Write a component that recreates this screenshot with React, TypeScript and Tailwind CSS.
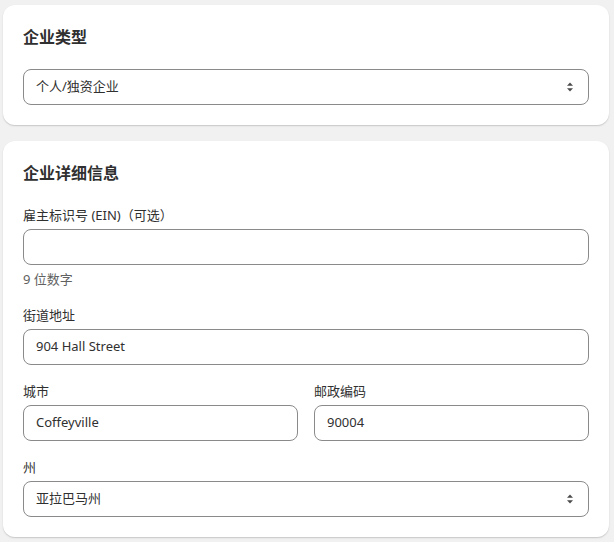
import React from "react";

const font = { fontFamily: '"Noto Sans", "Noto Sans CJK SC", sans-serif' };

function Arrows() {
  return (
    <svg width="8" height="12" viewBox="0 0 8 12" className="shrink-0">
      <path d="M4 1.5 L7 4.8 H1 Z" fill="#4a4a4a" />
      <path d="M4 10.5 L7 7.2 H1 Z" fill="#4a4a4a" />
    </svg>
  );
}

function Select({ value }: { value: string }) {
  return (
    <div className="flex h-9 items-center justify-between rounded-lg border border-[#8a8a8a] bg-white pl-3 pr-[14px] text-[13px] text-[#303030]">
      <span>{value}</span>
      <Arrows />
    </div>
  );
}

function Input({ value }: { value?: string }) {
  return (
    <div className="flex h-9 items-center rounded-lg border border-[#8a8a8a] bg-white px-3 text-[13px] text-[#303030]">
      <span>{value ?? ""}</span>
    </div>
  );
}

function Label({ children }: { children: React.ReactNode }) {
  return <div className="mb-1 text-[13px] leading-5 text-[#303030]">{children}</div>;
}

export default function App() {
  return (
    <div style={font} className="min-h-[542px] w-[614px] bg-[#f1f1f1] pl-[3px] pr-[5px] pt-[5px]">
      <div className="flex flex-col gap-5 rounded-xl bg-white p-5 shadow-[0_1px_2px_rgba(0,0,0,0.12),0_1px_0_rgba(0,0,0,0.06)]">
        <h2 className="text-base font-bold leading-6 text-[#303030]">企业类型</h2>
        <Select value="个人/独资企业" />
      </div>
      <div className="mt-4 flex flex-col rounded-xl bg-white p-5 shadow-[0_1px_2px_rgba(0,0,0,0.12),0_1px_0_rgba(0,0,0,0.06)]">
        <h2 className="mb-5 text-base font-bold leading-6 text-[#303030]">企业详细信息</h2>
        <div className="flex flex-col gap-4">
          <div>
            <Label>雇主标识号 (EIN)（可选）</Label>
            <Input />
            <div className="mt-1 text-[13px] leading-5 text-[#616161]">9 位数字</div>
          </div>
          <div>
            <Label>街道地址</Label>
            <Input value="904 Hall Street" />
          </div>
          <div className="grid grid-cols-2 gap-4">
            <div>
              <Label>城市</Label>
              <Input value="Coffeyville" />
            </div>
            <div>
              <Label>邮政编码</Label>
              <Input value="90004" />
            </div>
          </div>
          <div>
            <Label>州</Label>
            <Select value="亚拉巴马州" />
          </div>
        </div>
      </div>
    </div>
  );
}
